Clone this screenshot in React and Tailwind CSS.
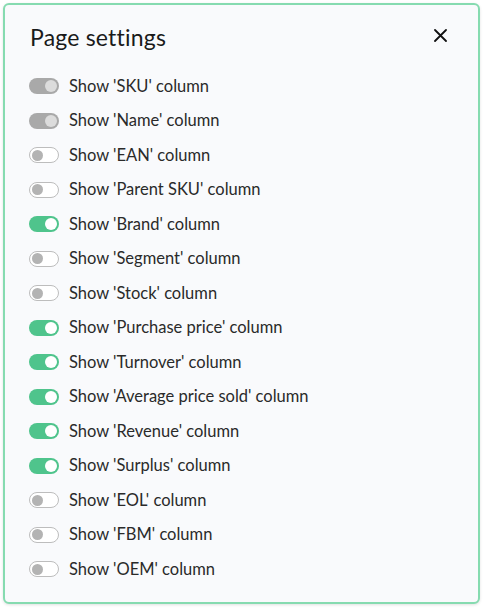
const columns = [
  { label: 'SKU', state: 'locked' },
  { label: 'Name', state: 'locked' },
  { label: 'EAN', state: 'off' },
  { label: 'Parent SKU', state: 'off' },
  { label: 'Brand', state: 'on' },
  { label: 'Segment', state: 'off' },
  { label: 'Stock', state: 'off' },
  { label: 'Purchase price', state: 'on' },
  { label: 'Turnover', state: 'on' },
  { label: 'Average price sold', state: 'on' },
  { label: 'Revenue', state: 'on' },
  { label: 'Surplus', state: 'on' },
  { label: 'EOL', state: 'off' },
  { label: 'FBM', state: 'off' },
  { label: 'OEM', state: 'off' },
];

function Toggle({ state }) {
  if (state === 'locked') {
    return (
      <div className="w-[30px] h-[16px] rounded-full bg-[#a9a9a9] flex items-center justify-end pr-[2px]">
        <div className="w-[12px] h-[12px] rounded-full bg-[#dcdcdc]" />
      </div>
    );
  }
  if (state === 'on') {
    return (
      <div className="w-[30px] h-[16px] rounded-full bg-[#4fc48c] flex items-center justify-end pr-[2px]">
        <div className="w-[12px] h-[12px] rounded-full bg-white" />
      </div>
    );
  }
  return (
    <div className="w-[30px] h-[16px] rounded-full bg-white border border-[#bdbdbd] flex items-center pl-[2px]">
      <div className="w-[11px] h-[11px] rounded-full bg-[#b3b3b3]" />
    </div>
  );
}

export default function App() {
  return (
    <div className="w-[483px] h-[609px] bg-white p-[3px]" style={{ fontFamily: 'Lato, "Open Sans", sans-serif' }}>
      <div className="h-[601px] w-[477px] rounded-md border-2 border-[#86dbb0] bg-[#f9fafc] shadow-[0_1px_3px_rgba(0,0,0,0.12)]">
        <div className="h-[64px] flex items-center justify-between pl-[25px] pr-[31px]">
          <h2 className="text-[23px] text-[#1a1a1a] tracking-[0.2px]">Page settings</h2>
          <svg width="13" height="13" viewBox="0 0 13 13" className="mt-[-4px]">
            <path d="M1 1L12 12M12 1L1 12" stroke="#111" strokeWidth="1.8" strokeLinecap="round" />
          </svg>
        </div>
        <div className="flex flex-col pl-[24px]">
          {columns.map((c) => (
            <div key={c.label} className="h-[34.5px] flex items-center gap-[10px]">
              <Toggle state={c.state} />
              <span className="text-[16.5px] text-[#2a2a2a]">Show '{c.label}' column</span>
            </div>
          ))}
        </div>
      </div>
    </div>
  );
}
